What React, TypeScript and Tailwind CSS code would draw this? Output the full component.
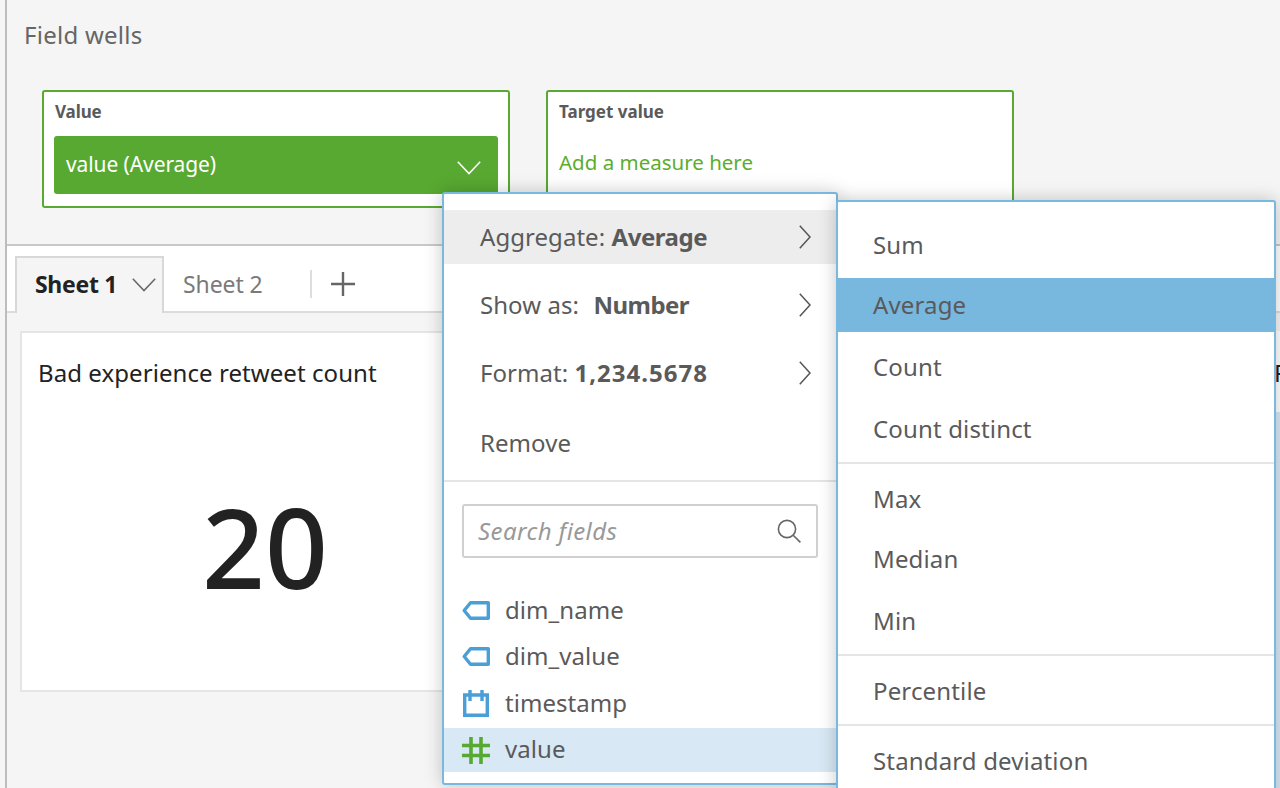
import React from "react";

const Chevron = ({ className }: { className?: string }) => (
  <svg viewBox="0 0 12 24" className={className} fill="none" stroke="currentColor" strokeWidth="1.5">
    <path d="M0.8 0.8 L11 12 L0.8 23.2" />
  </svg>
);

const ChevronDown = ({ className }: { className?: string }) => (
  <svg viewBox="0 0 24 14" className={className} fill="none" stroke="currentColor" strokeWidth="1.5">
    <path d="M0.8 0.8 L12 12.6 L23.2 0.8" />
  </svg>
);

const TagIcon = () => (
  <svg viewBox="0 0 28 19" className="w-[28px] h-[19px] shrink-0" fill="none" stroke="#4a9fd6" strokeWidth="3.4">
    <path d="M26.3 1.7 H8.5 L2.2 9.5 L8.5 17.3 H26.3 Z" strokeLinejoin="round" />
  </svg>
);

const CalendarIcon = () => (
  <svg viewBox="0 0 26 27" className="w-[26px] h-[27px] shrink-0 ml-[1px] mr-[1px]" fill="none" stroke="#4a9fd6" strokeWidth="3.4">
    <path d="M1.7 5 H24.3 V25.3 H1.7 Z" />
    <path d="M7 0 V11 M19 0 V11" />
  </svg>
);

const HashIcon = () => (
  <svg viewBox="0 0 28 27" className="w-[28px] h-[27px] shrink-0" fill="none" stroke="#58a931" strokeWidth="3.6">
    <path d="M9 0 V27 M19 0 V27 M0 8.5 H28 M0 18.5 H28" />
  </svg>
);

const MainRow = ({ h, bg, children, chev = true }: { h: string; bg?: string; children: React.ReactNode; chev?: boolean }) => (
  <div className={`flex items-center justify-between pl-[36px] pr-[25px] ${h} ${bg ?? ""}`}>
    <span className="whitespace-pre">{children}</span>
    {chev && <Chevron className="w-[12px] h-[24px] text-[#555]" />}
  </div>
);

const Field = ({ icon, label, cls, textCls }: { icon: React.ReactNode; label: string; cls: string; textCls?: string }) => (
  <div className={`flex items-center gap-[15px] pl-[18px] ${cls}`}>
    {icon}
    <span className={textCls}>{label}</span>
  </div>
);

const Sub = ({ cls, label }: { cls: string; label: string }) => (
  <div className={`flex items-center pl-[35px] ${cls}`}>{label}</div>
);

const Rule = () => <div className="h-[2px] bg-[#e5e5e5]" />;

export default function App() {
  return (
    <div className="relative w-[1280px] h-[788px] overflow-hidden bg-[#f5f5f5] font-['Noto_Sans','Open_Sans',sans-serif] text-[#5a5a5a]">
      <div className="flex h-full pl-[5px]">
        <div className="flex-1 flex flex-col border-l-2 border-[#bdbdbd] min-w-0">
          {/* Field wells */}
          <section className="h-[246px] shrink-0 border-b-2 border-[#c8c8c8] pl-[35px] pt-[19px]">
            <h2 className="ml-[-18px] text-[24px] leading-[32px] tracking-[0.25px] text-[#666]">Field wells</h2>
            <div className="flex gap-[36px] mt-[39px]">
              <div className="w-[468px] h-[118px] bg-white border-2 border-[#58a931] rounded-[3px] pl-[10px] pr-[10px] pt-[9px]">
                <div className="pl-[1px] text-[17px] leading-[22px] font-bold tracking-[-0.1px] text-[#5a5a5a]">Value</div>
                <div className="mt-[13px] h-[58px] bg-[#58a931] rounded-[3px] flex items-center justify-between pl-[12px] pr-[17px] text-white text-[21px] tracking-[-0.1px]">
                  <span>value (Average)</span>
                  <ChevronDown className="w-[24px] h-[14px] mt-[6px] text-white" />
                </div>
              </div>
              <div className="w-[468px] h-[118px] bg-white border-2 border-[#58a931] rounded-[3px] pl-[10px] pt-[9px]">
                <div className="pl-[1px] text-[17px] leading-[22px] font-bold text-[#5a5a5a]">Target value</div>
                <div className="pl-[1px] mt-[23px] text-[20.5px] leading-[32px] text-[#5bad2e]">Add a measure here</div>
              </div>
            </div>
          </section>

          {/* Sheet tabs */}
          <nav className="h-[67px] shrink-0 bg-white border-b-2 border-[#dcdcdc] flex items-end pl-[8px]">
            <div className="h-[57px] w-[149px] mb-[-2px] bg-[#f5f5f5] border-2 border-b-0 border-[#d8d8d8] flex items-center justify-between pl-[18px] pr-[6px] pb-[2px]">
              <span className="text-[23px] font-bold tracking-[-0.3px] text-[#222]">Sheet 1</span>
              <ChevronDown className="w-[24px] h-[14px] text-[#666]" />
            </div>
            <div className="h-[55px] flex items-center pl-[19px] pt-[1px]">
              <span className="w-[127px] text-[23px] tracking-[-0.1px] text-[#7a7a7a]">Sheet 2</span>
              <span className="w-[2px] h-[28px] bg-[#ddd]" />
              <svg viewBox="0 0 26 26" className="w-[26px] h-[26px] ml-[18px] text-[#666]" fill="none" stroke="currentColor" strokeWidth="2.4">
                <path d="M13 1 V25 M1 13 H25" />
              </svg>
            </div>
          </nav>

          {/* Canvas */}
          <main className="flex-1 flex items-start gap-[20px] pl-[13px] pt-[18px] min-h-0 overflow-hidden">
            <article className="w-[490px] h-[361px] shrink-0 bg-white border-2 border-[#e5e5e5] flex flex-col">
              <h3 className="pl-[16px] pt-[22px] text-[24px] leading-[36px] tracking-[0.07px] text-[#222]">Bad experience retweet count</h3>
              <div className="text-center text-[110px] leading-[120px] mt-[95px] font-medium text-[#222]">20</div>
            </article>
            <article className="w-[708px] h-[361px] shrink-0 bg-white border-2 border-[#e5e5e5]" />
            <article className="flex-1 h-[500px] shrink-0 min-w-[200px] bg-white">
              <div className="pl-[16px] pt-[24px] h-[81px] text-[24px] leading-[36px] text-[#222]">F</div>
              <div className="ml-[18px] h-full bg-[#d8e8f4]" />
            </article>
          </main>
        </div>
      </div>

      {/* Primary menu */}
      <div className="absolute left-[442px] top-[192px] w-[396px] h-[593px] bg-white border-2 border-[#79b8df] rounded-[3px] shadow-[0_0_18px_rgba(0,0,0,0.22)] text-[24px] tracking-[0.05px] text-[#5a5a5a]">
        <div className="h-[16px]" />
        <MainRow h="h-[54px]" bg="bg-[#ededed]">Aggregate: <b className="font-bold tracking-[-0.45px]">Average</b></MainRow>
        <div className="h-[7px]" />
        <MainRow h="h-[68px]">Show as:  <b className="ml-[2px] font-bold tracking-[-0.55px]">Number</b></MainRow>
        <MainRow h="h-[68px]">Format: <b className="font-bold tracking-[1px]">1,234.5678</b></MainRow>
        <MainRow h="h-[73px] pb-[2px]" chev={false}>Remove</MainRow>
        <Rule />
        <div className="mx-[18px] mt-[22px] h-[54px] border-2 border-[#d0d0d0] rounded-[3px] flex items-center justify-between pl-[14px] pr-[15px]">
          <span className="italic text-[#999] tracking-[0.4px]">Search fields</span>
          <svg viewBox="0 0 24 24" className="w-[24px] h-[24px] text-[#666]" fill="none" stroke="currentColor" strokeWidth="1.6">
            <circle cx="10" cy="10" r="8.6" />
            <path d="M16.2 16.2 L23.4 23.4" />
          </svg>
        </div>
        <div className="mt-[29px]">
          <Field icon={<TagIcon />} label="dim_name" cls="h-[46px]" />
          <Field icon={<TagIcon />} label="dim_value" cls="h-[46px]" />
          <Field icon={<CalendarIcon />} label="timestamp" cls="h-[48px] mb-[1px]" />
          <Field icon={<HashIcon />} label="value" cls="h-[44px] bg-[#d8e8f4]" textCls="pb-[2px]" />
        </div>
      </div>

      {/* Aggregate submenu */}
      <div className="absolute left-[836px] top-[200px] w-[440px] h-[620px] bg-white border-2 border-[#79b8df] rounded-[3px] shadow-[0_0_18px_rgba(0,0,0,0.22)] text-[24px] tracking-[0.15px] text-[#5a5a5a]">
        <Sub cls="h-[76px] pt-[10px]" label="Sum" />
        <Sub cls="h-[54px] bg-[#78b7de] -mx-[2px] pl-[37px]" label="Average" />
        <Sub cls="h-[70px]" label="Count" />
        <Sub cls="h-[60px] pb-[6px]" label="Count distinct" />
        <Rule />
        <Sub cls="h-[70px]" label="Max" />
        <Sub cls="h-[52px] pb-[2px]" label="Median" />
        <Sub cls="h-[68px] pt-[2px]" label="Min" />
        <Rule />
        <Sub cls="h-[68px] pt-[2px]" label="Percentile" />
        <Rule />
        <Sub cls="h-[70px]" label="Standard deviation" />
      </div>
    </div>
  );
}
